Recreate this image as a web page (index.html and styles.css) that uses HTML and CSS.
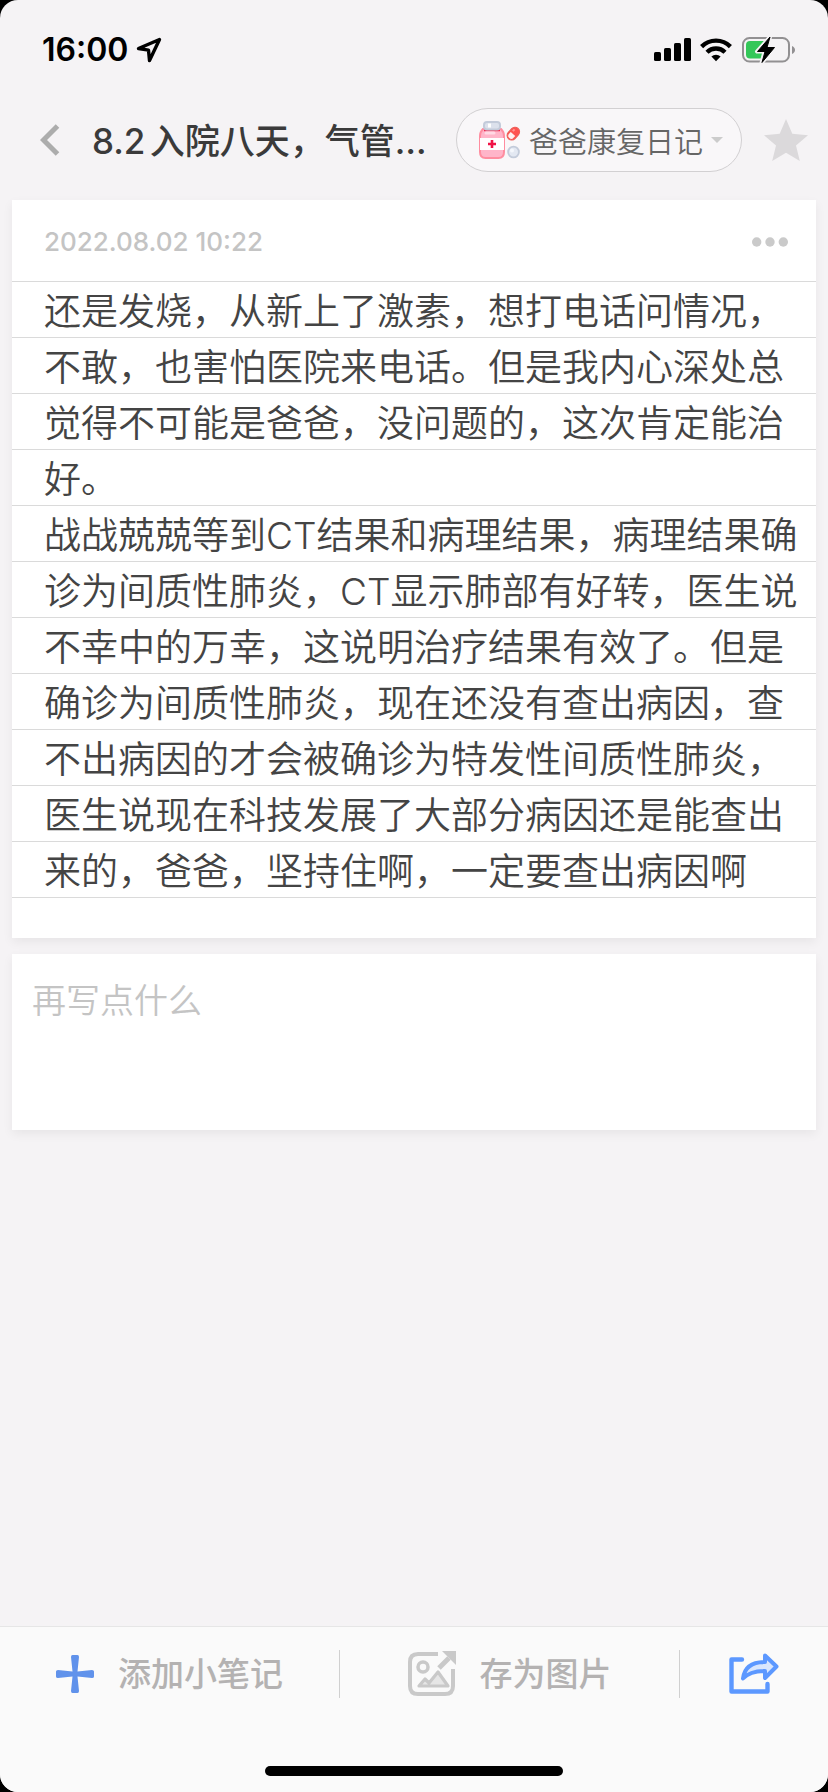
FILE: index.html
```html
<!DOCTYPE html>
<html lang="zh-CN">
<head>
<meta charset="utf-8">
<meta name="viewport" content="width=device-width, initial-scale=1">
<title>爸爸康复日记</title>
<link rel="stylesheet" href="styles.css">
</head>
<body>
<div class="screen">
  <div class="status">
    <div class="status-left">
      <span class="clock">16:00</span>
      <svg class="location" width="26" height="26" viewBox="0 0 26 26" aria-hidden="true"><path d="M23.5 2.5 2.5 11.5l10 1.6 1 10.4z" fill="none" stroke="#000" stroke-width="3.4" stroke-linejoin="round"/></svg>
    </div>
    <div class="status-right">
      <svg width="38" height="24" viewBox="0 0 38 24" aria-hidden="true"><rect x="0" y="14" width="7" height="9" rx="1.6"/><rect x="10" y="10" width="7" height="13" rx="1.6"/><rect x="20" y="5" width="7" height="18" rx="1.6"/><rect x="30" y="0" width="7" height="23" rx="1.6"/></svg>
      <svg width="32" height="24" viewBox="0 0 32 24" aria-hidden="true"><g fill="none" stroke="#000" stroke-width="4.4"><path d="M1.6 8.6a20.4 20.4 0 0 1 28.8 0"/><path d="M7 14.2a12.8 12.8 0 0 1 18 0"/></g><path d="M11.4 18.5a6.6 6.6 0 0 1 9.2 0L16 23.2z"/></svg>
      <svg width="56" height="28" viewBox="-2 0 56 28" aria-hidden="true"><rect x="1" y="2" width="46" height="23.5" rx="6.5" fill="none" stroke="#929092" stroke-width="2"/><path d="M50 10c4 1.6 4 6.400 0 8z" fill="#929092"/><rect x="4" y="5" width="21" height="17.500" rx="4" fill="#34c759"/><path d="M28 1 15 15.500h7.500L19.500 27 33 11.500h-7.500z" stroke="#f5f3f5" stroke-width="4" stroke-linejoin="round"/><path d="M28 1 15.500 15.500h7.500L20 26.500 32.500 11.500h-7.500z" stroke="#000" stroke-linejoin="round"/></svg>
    </div>
  </div>

  <header class="nav">
    <button class="back" type="button" aria-label="返回"><svg width="20" height="32" viewBox="0 0 20 32"><path d="M17.500 2 3.500 16l14 14" fill="none" stroke="#acacac" stroke-width="5"/></svg></button>
    <h1 class="title">8.2入院八天，气管…</h1>
    <button class="notebook" type="button">
      <svg width="42" height="38" viewBox="0 0 42 38" aria-hidden="true">
        <path d="M4 8h18c2 2 3 4 3 7v16c0 4-2 6-5.500 6h-13C3 37 1 35 1 31V15c0-3 1-5 3-7z" fill="#ffb5c9" stroke="#ff8da0" stroke-width="2"/>
        <path d="M5 9h16" stroke="#f0284f" stroke-width="2.500"/>
        <path d="M7 12h8" stroke="#ffd9e4" stroke-width="3" stroke-linecap="round"/>
        <rect x="1" y="17" width="24" height="12" fill="#fff"/>
        <path d="M13 19v8M9 23h8" stroke="#f01346" stroke-width="2.600"/>
        <rect x="5" y="1" width="16" height="7.500" rx="3" fill="#dce1ec" stroke="#c3cbda" stroke-width="2"/>
        <path d="M9 4.500h3" stroke="#fff" stroke-width="4"/>
        <g transform="rotate(-48 34 13)"><rect x="27.500" y="8.500" width="14" height="9" rx="4.500" fill="#ff5350" stroke="#ee5e58" stroke-width="1.200"/><path d="M34 10h-2.500a3 3 0 0 0 0 6H34z" fill="#fff1f0"/><path d="M36 11h2.500" stroke="#ff9895" stroke-width="2"/></g>
        <circle cx="34.500" cy="31" r="5.400" fill="#e3e8f2" stroke="#c3cbda" stroke-width="1.800"/>
        <circle cx="33" cy="29.500" r="2" fill="#f4f7fc"/>
      </svg>
      <span>爸爸康复日记</span>
      <svg width="12" height="6" viewBox="0 0 12 6" aria-hidden="true"><path d="M0 0h12L6 6z" fill="#ccc"/></svg>
    </button>
    <button class="star" type="button" aria-label="收藏"><svg width="44" height="42" viewBox="0 0 44 42"><path d="m22 0 6.300 14.800L44 16.200 32 26.600 35.800 42 22 33.700 8.200 42 12 26.600 0 16.200l15.700-1.400z" fill="#dbd9db"/></svg></button>
  </header>

  <main class="content">
    <article class="card">
      <div class="card-head">
        <time class="date" datetime="2022-08-02T10:22">2022.08.02 10:22</time>
        <button class="more" type="button" aria-label="更多"><svg width="36" height="10" viewBox="0 0 36 10" fill="#cacaca"><circle cx="4.700" cy="5" r="4.700"/><circle cx="18" cy="5" r="4.700"/><circle cx="31.300" cy="5" r="4.700"/></svg></button>
      </div>
      <div class="lines">
        <p>还是发烧，从新上了激素，想打电话问情况，不敢，也害怕医院来电话。但是我内心深处总觉得不可能是爸爸，没问题的，这次肯定能治好。</p>
        <p>战战兢兢等到CT结果和病理结果，病理结果确诊为间质性肺炎，CT显示肺部有好转，医生说不幸中的万幸，这说明治疗结果有效了。但是确诊为间质性肺炎，现在还没有查出病因，查不出病因的才会被确诊为特发性间质性肺炎，医生说现在科技发展了大部分病因还是能查出来的，爸爸，坚持住啊，一定要查出病因啊</p>
      </div>
    </article>
    <textarea class="card composer" aria-label="再写点什么" placeholder="再写点什么"></textarea>
  </main>

  <footer class="toolbar">
    <div class="actions">
      <button class="action add" type="button">
        <svg width="38" height="38" viewBox="0 0 38 38" aria-hidden="true"><path d="M16.500 0h5q1.500 0 1.500 2L21.500 16.500 36 15q2 0 2 1.500v5q0 1.500-2 1.500l-14.500-1.500L23 36q0 2-1.500 2h-5Q15 38 15 36l1.500-14.500L2 23q-2 0-2-1.500v-5Q0 15 2 15l14.500 1.500L15 2q0-2 1.500-2z" fill="#6092eb"/></svg>
        <span>添加小笔记</span>
      </button>
      <button class="action" type="button">
        <svg width="48" height="46" viewBox="0 0 48 46" aria-hidden="true"><g fill="none" stroke="#c9c9c9" stroke-width="4"><path d="M30 3H10q-8 0-8 8v24q0 8 8 8h27q8 0 8-8V18"/><circle cx="15" cy="16" r="5" stroke-width="3.500"/></g><path d="m11 35 6-7 4 4 9-11 10 14z" fill="#e6e6e6" stroke="#c9c9c9" stroke-width="3.200" stroke-linejoin="round"/><path d="m31 17 10-10" stroke="#c9c9c9" stroke-width="5"/><path d="M34 0h14v14z" fill="#c9c9c9"/></svg>
        <span>存为图片</span>
      </button>
      <button class="action share" type="button" aria-label="分享">
        <svg width="50" height="42" viewBox="0 0 50 42" aria-hidden="true" fill="none" stroke="#5c98ff" stroke-width="4.400" stroke-linecap="round" stroke-linejoin="round"><path d="M13 6.500H2.500v32H38.500V31"/><path d="M14 25.500Q16 9 36 9V2.500L47.500 13.500 36 25V18Q21 18 14 25.500z" fill="#d9e6fd" stroke-width="4"/></svg>
      </button>
    </div>
    <div class="home"></div>
  </footer>
</div>
</body>
</html>
```
FILE: styles.css
```css
* { box-sizing: border-box; }

body {
  margin: 0;
  background: #000;
  font-family: Inter, "Noto Sans CJK SC", sans-serif;
  color: #444;
}

button {
  margin: 0;
  padding: 0;
  border: 0;
  background: none;
  font: inherit;
  color: inherit;
}

svg { display: block; flex: none; }

.screen {
  min-height: 100vh;
  display: flex;
  flex-direction: column;
  background: #f5f3f5;
  border-radius: 18px;
  overflow: hidden;
}

.status {
  height: 100px;
  padding: 0 32px 0 42px;
  display: flex;
  align-items: center;
  justify-content: space-between;
  color: #000;
}
.status-left { display: flex; align-items: center; gap: 8px; }
.status-right { display: flex; align-items: center; gap: 8px; }
.clock { font-size: 32px; font-weight: 600; line-height: 40px; }

.nav {
  height: 80px;
  padding: 0 20px 0 40px;
  display: flex;
  align-items: center;
}
.back { padding-right: 32px; }
.title {
  flex: 1;
  min-width: 0;
  margin: 0;
  padding-top: 2px;
  font-size: 35px;
  font-weight: 500;
  line-height: 48px;
  color: #3a3a3a;
  white-space: nowrap;
  text-autospace: normal;
}
.notebook {
  height: 64px;
  padding: 0 18px 0 22px;
  display: flex;
  align-items: center;
  gap: 8px;
  border: 1px solid #d2d0d2;
  border-radius: 32px;
  background: #f9f7f9;
  font-size: 29px;
  font-weight: 350;
  color: #666;
}
.star { margin-left: 22px; }

.content {
  flex: 1;
  padding: 20px 12px;
  display: flex;
  flex-direction: column;
  gap: 16px;
}
.card {
  background: #fff;
  box-shadow: 0 4px 10px rgba(0, 0, 0, 0.06);
}
.card-head {
  height: 82px;
  padding: 2px 28px 0 32px;
  display: flex;
  align-items: center;
  justify-content: space-between;
  border-bottom: 1px solid #dadada;
}
.date { font-size: 26px; font-weight: 500; color: #c4c4c4; }
.lines {
  padding: 2px 10px 0 32px;
  margin-bottom: 38px;
  font-size: 37px;
  font-weight: 350;
  line-height: 56px;
  background: repeating-linear-gradient(transparent 0 55px, #dadada 55px 56px);
}
.lines p { margin: 0; }

.composer {
  display: block;
  width: 100%;
  height: 176px;
  padding: 22px 20px;
  border: 0;
  border-radius: 0;
  resize: none;
  outline: 0;
  font-family: inherit;
  font-size: 34px;
  font-weight: 350;
  line-height: 50px;
  color: #444;
}
.composer::placeholder { color: #c4c4c4; opacity: 1; }

.toolbar {
  border-top: 1px solid #e6e6e6;
  background: #fafafa;
}
.actions {
  padding: 23px 0;
  display: grid;
  grid-template-columns: 340fr 340fr 148fr;
}
.action {
  height: 48px;
  display: flex;
  align-items: center;
  justify-content: center;
  gap: 24px;
  border-right: 1px solid #d0d0d0;
  font-size: 33px;
  font-weight: 500;
  color: #b4b2b2;
}
.action span { padding-bottom: 4px; }
.share { border-right: 0; }
.home {
  width: 36%;
  height: 10px;
  margin: 45px auto 16px;
  border-radius: 5px;
  background: #000;
}
```
